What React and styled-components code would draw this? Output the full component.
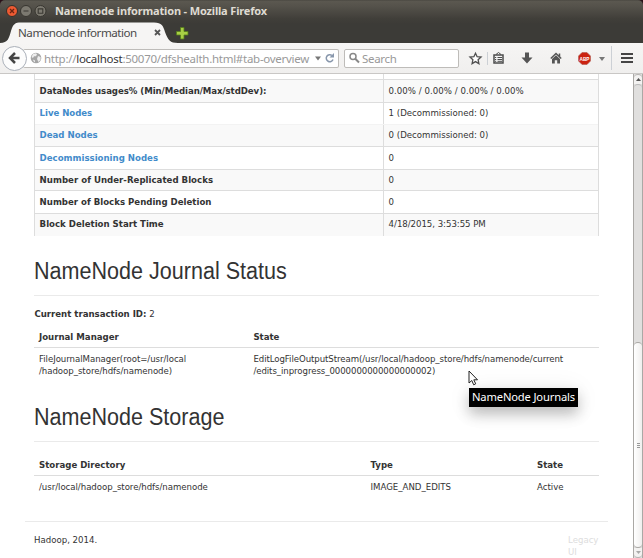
import React from "react";
import styled, { createGlobalStyle } from "styled-components";

const GlobalStyle = createGlobalStyle`
  * { box-sizing: border-box; }
  html, body { margin: 0; padding: 0; overflow: hidden; background: #fff; }
`;

const uiFont = `"Noto Sans", "Open Sans", sans-serif`;
const bodyFont = `"DejaVu Sans", sans-serif`;

const Window = styled.div`
  width: 643px;
  height: 558px;
  display: flex;
  flex-direction: column;
  overflow: hidden;
  position: relative;
  background: #fff;
  font-family: ${bodyFont};
  font-size: 8.6px;
  color: #333;
`;

const Chrome = styled.header`
  flex: none;
  height: 43px;
  background: #2a1119;
`;

const ChromeFill = styled.div`
  height: 43px;
  border-radius: 5px 5px 0 0;
  background: linear-gradient(#45433d 0, #5b5850 1px, #55524b 6px, #403e39 19px, #3c3b37 24px, #3c3b37 100%);
`;

const TitleBar = styled.div`
  height: 22px;
  display: flex;
  align-items: center;
  padding-left: 6px;
`;

const WindowTitle = styled.div`
  margin-left: 8px;
  font: 700 11px/22px ${uiFont};
  letter-spacing: -0.16px;
  color: #dfdbd2;
  white-space: nowrap;
`;

const TabStrip = styled.div`
  height: 21px;
  display: flex;
`;

const Tab = styled.div`
  width: 172px;
  height: 21px;
  display: grid;
  > * { grid-area: 1 / 1; }
`;

const TabContent = styled.div`
  display: flex;
  align-items: center;
  width: 161px;
  padding-left: 18px;
  justify-content: space-between;
  font: 11.6px/21px ${uiFont};
  letter-spacing: -0.47px;
  color: #4a4a4a;
  white-space: nowrap;
`;

const NavBar = styled.nav`
  flex: none;
  height: 31px;
  display: flex;
  align-items: center;
  border-bottom: 1px solid #c9c7c5;
  background: linear-gradient(#f6f5f4, #f0efee);
`;

const BackButton = styled.div`
  width: 25px;
  height: 25px;
  margin-left: 2px;
  flex: none;
  border: 1px solid #aab0b9;
  border-radius: 50%;
  background: #fcfcfc;
  display: flex;
  align-items: center;
  justify-content: center;
  z-index: 1;
`;

const Field = styled.div`
  width: ${(p) => p.$width}px;
  height: 19px;
  flex: none;
  display: flex;
  align-items: center;
  border: 1px solid #bebcb9;
  border-radius: 2px;
  background: #fff;
  font: 11.5px/17px ${uiFont};
  color: #999;
  white-space: nowrap;
  svg { flex: none; }
`;

const UrlField = styled(Field)`
  margin-left: -4px;
  padding-left: 7px;
  border-left: 0;
`;

const SearchField = styled(Field)`
  margin-left: 5px;
  padding-left: 4px;
`;

const FieldText = styled.span`
  margin-left: ${(p) => p.$gap}px;
  letter-spacing: ${(p) => p.$spacing}px;
  flex: 1;
  b { font-weight: 400; color: #333; }
`;

const Tools = styled.div`
  flex: 1;
  display: flex;
  height: 30px;
  padding-left: 10px;
  align-items: center;
`;

const Divider = styled.div`
  width: 1px;
  height: ${(p) => p.$height}px;
  margin-left: ${(p) => p.$gap}px;
  background: #ccd0d5;
`;

const ToolIcon = styled.svg`
  display: block;
  flex: none;
  margin-left: ${(p) => p.$gap || 0}px;
  overflow: visible;
`;

const Viewport = styled.div`
  flex: 1;
  display: flex;
  min-height: 0;
`;

const Page = styled.main`
  width: 633px;
  padding: 0 34px;
`;

const Summary = styled.div`
  width: 565px;
  border: solid #ddd;
  border-width: 0 1px;
`;

const SummaryRow = styled.div`
  display: grid;
  grid-template-columns: 349px 1fr;
  height: ${(p) => p.$height}px;
  border-top: ${(p) => (p.$first ? 0 : 1)}px solid ${(p) => (p.$soft ? "#f3f3f3" : "#ddd")};
  background: ${(p) => (p.$striped ? "#f9f9f9" : "#fff")};
  line-height: ${(p) => p.$line || 23}px;
  white-space: nowrap;
`;

const Name = styled.div`
  padding-left: 4.6px;
  border-right: 1px solid #ddd;
  font-weight: 700;
  letter-spacing: ${(p) => p.$spacing || 0}px;
  color: ${(p) => (p.$link ? "#428bca" : "#333")};
`;

const Value = styled.div`
  padding-left: 4.6px;
  letter-spacing: ${(p) => p.$spacing || 0}px;
`;

const Heading = styled.h1`
  margin: ${(p) => p.$top}px 0 0;
  width: 565px;
  height: 42px;
  padding-left: 0.4px;
  border-bottom: 1px solid #eaeaea;
  font: 400 23px/34px "Liberation Sans", Arial, sans-serif;
  color: #333;
  white-space: nowrap;
  span {
    display: inline-block;
    transform: scaleX(0.937);
    transform-origin: left;
  }
`;

const Transaction = styled.p`
  margin: 11px 0 5px;
  padding-left: 0.4px;
  line-height: 14px;
`;

const Grid = styled.div`
  display: grid;
  grid-template-columns: ${(p) => p.$columns};
  width: 565px;
  margin-top: ${(p) => p.$top || 0}px;
  white-space: nowrap;
`;

const HeadCell = styled.div`
  height: 22px;
  padding-left: 5px;
  border-bottom: 1px solid #ddd;
  line-height: 23px;
  font-weight: 700;
`;

const Cell = styled.div`
  padding: 5px 0 0 5px;
  line-height: 12px;
  letter-spacing: ${(p) => p.$spacing || 0}px;
`;

const Footer = styled.footer`
  margin: 28px -9px 0;
  width: 583px;
  padding: 12px 10px 0 9px;
  border-top: 1px solid #eaeaea;
  display: flex;
  justify-content: space-between;
  line-height: 12px;
`;

const Legacy = styled.div`
  width: 30px;
  color: #ddd;
`;

const Scrollbar = styled.div`
  width: 10px;
  flex: none;
  display: flex;
  flex-direction: column;
  border: 1px solid #aaa8a5;
  border-width: 0 1px;
  background: #e0dfde;
`;

const ScrollEnd = styled.div`
  height: 10px;
  flex: none;
  display: flex;
  align-items: center;
  justify-content: center;
  border: solid #b5b3b1;
  border-width: ${(p) => (p.$bottom ? "0 0 1px" : "1px 0 0")};
  border-radius: ${(p) => (p.$bottom ? "0 0 4px 4px" : "4px 4px 0 0")};
  background: #f3f2f1;
`;

const Track = styled.div`
  height: 258px;
  border-top: 1px solid #bbb;
  border-radius: 4px 4px 0 0;
`;

const Thumb = styled.div`
  flex: 1;
  border: 1px solid #aaa8a5;
  border-width: 1px 0;
  border-radius: 4px;
  background: linear-gradient(90deg, #fff, #f0efee);
  display: flex;
  flex-direction: column;
  align-items: center;
  justify-content: center;
  gap: 1px;
`;

const Grip = styled.i`
  width: 3px;
  height: 1px;
  background: #999;
`;

const Tooltip = styled.div`
  position: absolute;
  left: 469px;
  top: 388px;
  width: 109px;
  height: 19px;
  padding-left: 3px;
  background: #000;
  color: #fff;
  font: 11.2px/18px ${uiFont};
  letter-spacing: -0.16px;
  white-space: nowrap;
  box-shadow: 0 7px 14px rgba(0, 0, 0, 0.24), 0 2px 26px rgba(0, 0, 0, 0.08);
`;

const Pointer = styled.svg`
  position: absolute;
  left: 468px;
  top: 370px;
`;

const rows = [
  { name: "DataNodes usages% (Min/Median/Max/stdDev):", value: "0.00% / 0.00% / 0.00% / 0.00%", height: 23, striped: true, spacing: -0.06, valueSpacing: 0.03 },
  { name: "Live Nodes", value: "1 (Decommissioned: 0)", height: 22, link: true, line: 21, spacing: -0.05 },
  { name: "Dead Nodes", value: "0 (Decommissioned: 0)", height: 22, link: true, striped: true, soft: true, line: 21 },
  { name: "Decommissioning Nodes", value: "0", height: 23, link: true, line: 22 },
  { name: "Number of Under-Replicated Blocks", value: "0", height: 21, striped: true, line: 21, spacing: 0.02 },
  { name: "Number of Blocks Pending Deletion", value: "0", height: 23 },
  { name: "Block Deletion Start Time", value: "4/18/2015, 3:53:55 PM", height: 23, striped: true, line: 21, valueSpacing: -0.04 },
];

function WindowButtons() {
  return (
    <svg width="41" height="14" viewBox="0 0 41 14">
      <circle cx="6" cy="7" r="5.5" fill="#ed5a32" stroke="#33302b" />
      <path d="M4 5l4 4m0-4l-4 4" stroke="#6c2411" strokeWidth="1.3" />
      <g fill="#7c7970" stroke="#383630">
        <circle cx="20" cy="7" r="5.5" />
        <circle cx="34.5" cy="7" r="5.5" />
      </g>
      <path d="M17.5 7h5M32.2 4.9h4.6v4.3h-4.6z" fill="none" stroke="#3a3832" strokeWidth="1.1" />
    </svg>
  );
}

export default function App() {
  return (
    <Window>
      <GlobalStyle />
      <Chrome>
        <ChromeFill>
          <TitleBar>
            <WindowButtons />
            <WindowTitle>Namenode information - Mozilla Firefox</WindowTitle>
          </TitleBar>
          <TabStrip>
            <Tab>
              <svg width="178" height="21" viewBox="0 0 178 21">
                <path d="M0 21C8 21 9 16 11 9C13 2 15 .5 21 .5H154C162 .5 163 4 165 10C168 18 170 21 178 21Z" fill="#f6f5f4" />
              </svg>
              <TabContent>
                <span>Namenode information</span>
                <svg width="7" height="7" viewBox="0 0 7 7">
                  <path d="M1 1l5 5m0-5l-5 5" stroke="#555" strokeWidth="1.8" />
                </svg>
              </TabContent>
            </Tab>
            <svg width="20" height="21" viewBox="0 0 20 21">
              <path d="M8.5 5.5H12v4h4V13h-4v4H8.500v-4h-4V9.500h4z" fill="#a8cf45" stroke="#557d19" strokeWidth=".8" />
            </svg>
          </TabStrip>
        </ChromeFill>
      </Chrome>
      <NavBar>
        <BackButton>
          <svg width="13" height="12" viewBox="0 0 13 12">
            <path d="M7 1L2 6l5 5M2 6h9.500" fill="none" stroke="#444" strokeWidth="2.500" />
          </svg>
        </BackButton>
        <UrlField $width={316}>
          <svg width="12" height="12" viewBox="0 0 12 12">
            <circle cx="6" cy="6" r="5.300" fill="#a5a5a5" />
            <path d="M3 2l3-.8 1 1.300-1 1.800H4L3 6 1.500 5zM8 4l2.500 1v3L8.500 10 7 7zM3 7.500l2 1v2L3.500 9z" fill="#ededed" />
          </svg>
          <FieldText $gap={2} $spacing={-0.27}>http://<b>localhost</b>:50070/dfshealth.html#tab-overview</FieldText>
          <svg width="23" height="12" viewBox="0 0 23 12">
            <path d="M0 4.500h6L3 8.500z" fill="#777" />
            <path d="M17 3.500A3.500 3.500 0 1 0 18 7.500" fill="none" stroke="#8897ac" strokeWidth="1.500" />
            <path d="M19 1v4.500h-4.500z" fill="#8897ac" />
          </svg>
        </UrlField>
        <SearchField $width={115}>
          <svg width="11" height="12" viewBox="0 0 11 12">
            <circle cx="4" cy="4.500" r="3" fill="none" stroke="#888" strokeWidth="1.500" />
            <path d="M6 6.500l4 4" stroke="#888" strokeWidth="2" />
          </svg>
          <FieldText $gap={2} $spacing={-0.3}>Search</FieldText>
        </SearchField>
        <Tools>
          <ToolIcon width="13" height="13" viewBox="0 0 13 13">
            <path d="M6.500 1.200l1.600 3.500 3.900.4-2.900 2.600.8 3.900-3.400-2-3.400 2 .8-3.900L1 5.100l3.900-.4z" fill="#fff" stroke="#505050" strokeWidth="1.300" />
          </ToolIcon>
          <Divider $height={13} $gap={5} />
          <ToolIcon $gap={5} width="11" height="12" viewBox="0 0 11 12">
            <path d="M1 3h9v8H1z" fill="#f4f4f4" stroke="#4c4c4c" strokeWidth="1.500" />
            <path d="M3 2.500L5.500.5 8 2.500M2 5.500h1.200M4.500 5.500H9M2 7.500h1.200M4.500 7.500H9M2 9.300h1.200M4.500 9.300H9" fill="none" stroke="#4c4c4c" />
          </ToolIcon>
          <ToolIcon $gap={17} width="12" height="12" viewBox="0 0 12 12">
            <path d="M4 .5h4v5h3.500L6 11.500.5 5.500H4z" fill="#555" />
          </ToolIcon>
          <ToolIcon $gap={17} width="12" height="12" viewBox="0 0 12 12">
            <path d="M.8 6.500L6 1.500l5.200 5M9.500 1.500v3" fill="none" stroke="#555" strokeWidth="1.500" />
            <path d="M2 7l4-3.800L10 7v4.500H7.200V8.300H4.800v3.200H2z" fill="#555" />
          </ToolIcon>
          <ToolIcon $gap={16} width="13" height="13" viewBox="0 0 13 13">
            <path d="M4 .5h5L12.500 4v5L9 12.500H4L.5 9V4z" fill="#cb2311" stroke="#b05b50" strokeWidth=".6" />
            <text x="6.500" y="8.800" textAnchor="middle" fontFamily="Liberation Sans, sans-serif" fontWeight="700" fontSize="6" textLength="10" lengthAdjust="spacingAndGlyphs" fill="#fff">ABP</text>
          </ToolIcon>
          <ToolIcon $gap={8} width="6" height="5" viewBox="0 0 6 5">
            <path d="M0 1h6L3 5z" fill="#777" />
          </ToolIcon>
          <Divider $height={24} $gap={6} />
          <ToolIcon $gap={9} width="12" height="12" viewBox="0 0 12 12">
            <path d="M0 2h12M0 6h12M0 10h12" stroke="#454545" strokeWidth="2.200" />
          </ToolIcon>
        </Tools>
      </NavBar>
      <Viewport>
        <Page>
          <Summary>
            <SummaryRow $height={5} $first>
              <Name />
              <Value />
            </SummaryRow>
            {rows.map((r) => (
              <SummaryRow key={r.name} $height={r.height} $striped={r.striped} $soft={r.soft} $line={r.line}>
                <Name $link={r.link} $spacing={r.spacing}>{r.name}</Name>
                <Value $spacing={r.valueSpacing}>{r.value}</Value>
              </SummaryRow>
            ))}
          </Summary>
          <Heading $top={18}><span>NameNode Journal Status</span></Heading>
          <Transaction><strong>Current transaction ID:</strong> 2</Transaction>
          <Grid $columns="214.4px 350.6px">
            <HeadCell>Journal Manager</HeadCell>
            <HeadCell>State</HeadCell>
            <Cell $spacing={-0.05}>FileJournalManager(root=/usr/local<br />/hadoop_store/hdfs/namenode)</Cell>
            <Cell $spacing={-0.075}>EditLogFileOutputStream(/usr/local/hadoop_store/hdfs/namenode/current<br />/edits_inprogress_0000000000000000002)</Cell>
          </Grid>
          <Heading $top={23}><span>NameNode Storage</span></Heading>
          <Grid $columns="331.500px 166.500px 67px" $top={12}>
            <HeadCell>Storage Directory</HeadCell>
            <HeadCell>Type</HeadCell>
            <HeadCell>State</HeadCell>
            <Cell $spacing={-0.04}>/usr/local/hadoop_store/hdfs/namenode</Cell>
            <Cell>IMAGE_AND_EDITS</Cell>
            <Cell>Active</Cell>
          </Grid>
          <Footer>
            <span>Hadoop, 2014.</span>
            <Legacy>Legacy<br />UI</Legacy>
          </Footer>
        </Page>
        <Scrollbar>
          <ScrollEnd>
            <svg width="5" height="3" viewBox="0 0 5 3"><path d="M0 3L2.500 0 5 3z" fill="#555" /></svg>
          </ScrollEnd>
          <Track />
          <Thumb><Grip /><Grip /><Grip /></Thumb>
          <ScrollEnd $bottom>
            <svg width="5" height="3" viewBox="0 0 5 3"><path d="M0 0h5L2.500 3z" fill="#aaa" /></svg>
          </ScrollEnd>
        </Scrollbar>
      </Viewport>
      <Tooltip>NameNode Journals</Tooltip>
      <Pointer width="11" height="17" viewBox="0 0 11 17">
        <path d="M1 1v12l2.800-2.500 1.900 4.300 2-1-1.900-4H9.500z" fill="#fff" stroke="#222" />
      </Pointer>
    </Window>
  );
}
